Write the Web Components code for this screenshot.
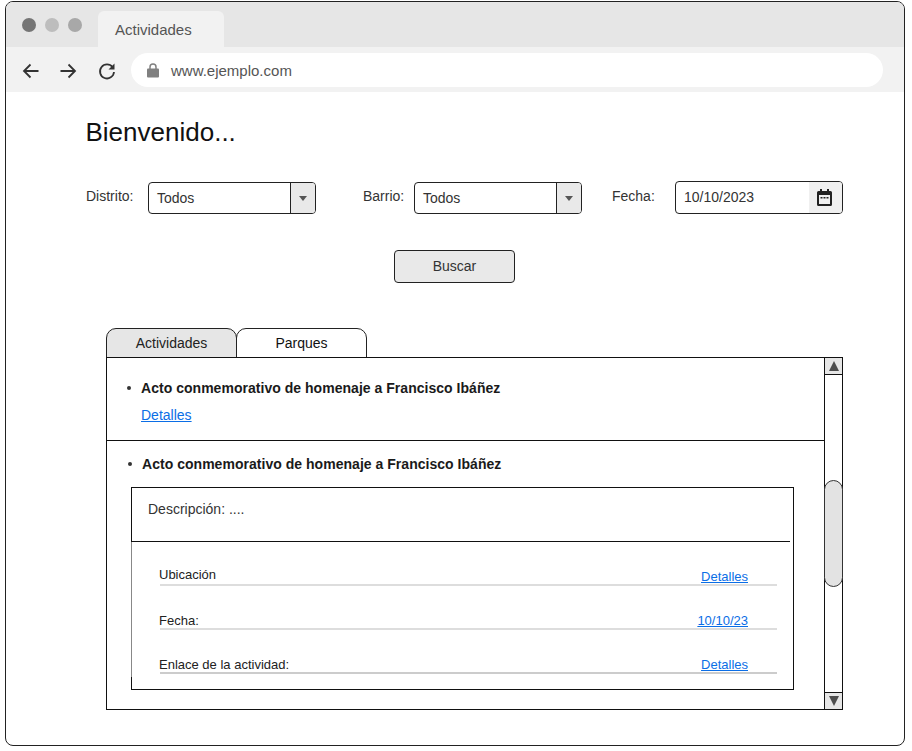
<!DOCTYPE html>
<html lang="es">
<head>
<meta charset="utf-8">
<title>Actividades</title>
<style>
  html, body { margin: 0; padding: 0; background: #fff; }
  body { font-family: "Liberation Sans", Arial, sans-serif; font-size: 14px; color: #222; }
</style>
</head>
<body>
<app-browser tab="Actividades" url="www.ejemplo.com">
  <app-search></app-search>
  <app-tabs>
    <app-scroll-panel>
      <app-activity title="Acto conmemorativo de homenaje a Francisco Ibáñez"></app-activity>
      <app-activity open title="Acto conmemorativo de homenaje a Francisco Ibáñez">
        <app-detail class="raised" label="Ubicación" value="Detalles"></app-detail>
        <app-detail label="Fecha:" value="10/10/23"></app-detail>
        <app-detail label="Enlace de la actividad:" value="Detalles"></app-detail>
      </app-activity>
    </app-scroll-panel>
  </app-tabs>
</app-browser>

<script>
class AppBrowser extends HTMLElement {
  connectedCallback() {
    const tab = this.getAttribute('tab');
    const url = this.getAttribute('url');
    this.attachShadow({ mode: 'open' }).innerHTML = `
      <style>
        :host {
          display: block;
          box-sizing: border-box;
          width: 900px;
          height: 745px;
          margin: 1px 0 0 5px;
          border: 1px solid #222;
          border-radius: 8px;
          overflow: hidden;
        }
        .strip {
          display: flex;
          height: 45px;
          background: #e6e6e6;
          box-sizing: border-box;
          padding: 9px 0 0 16px;
        }
        .dots { display: flex; gap: 9px; width: 76px; padding-top: 7px; }
        .dot { width: 14px; height: 14px; border-radius: 50%; background: #757575; }
        .dot:nth-child(2) { background: #bdbdbd; }
        .dot:nth-child(3) { background: #a8a8a8; }
        .tab {
          width: 126px;
          box-sizing: border-box;
          padding: 10px 0 0 17px;
          background: #f2f2f2;
          border-radius: 6px 6px 0 0;
          font-size: 15px;
          color: #555;
        }
        .bar {
          display: flex;
          align-items: flex-start;
          height: 45px;
          box-sizing: border-box;
          padding: 6px 21px 0 0;
          background: #f2f2f2;
        }
        .nav { display: flex; align-items: center; height: 34px; padding-left: 15px; width: 125px; box-sizing: border-box; }
        .nav svg { display: block; flex: none; margin-top: 1px; }
        .nav svg:nth-child(2) { margin-left: 17px; }
        .nav svg:nth-child(3) { margin-left: 19px; }
        .address {
          flex: 1;
          display: flex;
          align-items: center;
          gap: 12px;
          height: 34px;
          box-sizing: border-box;
          padding-left: 16px;
          background: #fff;
          border-radius: 17px;
          font-size: 15px;
          color: #555;
        }
        .address svg { display: block; }
        main { padding: 25px 0 0 80px; }
        h1 { margin: 0 0 0 -0.5px; font-size: 26px; font-weight: 400; line-height: 30px; color: #111; }
      </style>
      <div class="strip">
        <div class="dots"><span class="dot"></span><span class="dot"></span><span class="dot"></span></div>
        <div class="tab">${tab}</div>
      </div>
      <div class="bar">
        <div class="nav">
          <svg width="20" height="20" viewBox="0 0 20 20" fill="none" stroke="#333" stroke-width="1.800"><path d="M17.500 10H3M9.500 3.500 3 10l6.500 6.500"/></svg>
          <svg width="20" height="20" viewBox="0 0 20 20" fill="none" stroke="#333" stroke-width="1.800"><path d="M2.500 10H17M10.500 3.500 17 10l-6.500 6.500"/></svg>
          <svg width="20" height="20" viewBox="0 0 20 20" fill="none" stroke="#333" stroke-width="1.800"><path d="M15.600 6.200A7 7 0 1 0 17 11"/><path fill="#333" stroke="none" d="M17.500 2.500v6h-6z"/></svg>
        </div>
        <div class="address">
          <svg width="12" height="15" viewBox="0 0 12 15"><path fill="none" stroke="#808080" stroke-width="1.500" d="M3 6.500V4a3 3 0 0 1 6 0v2.500"/><rect y="5.500" width="12" height="9" rx="1" fill="#808080"/></svg>
          <span>${url}</span>
        </div>
      </div>
      <main>
        <h1>Bienvenido...</h1>
        <slot></slot>
      </main>`;
  }
}

class AppSelect extends HTMLElement {
  connectedCallback() {
    this.attachShadow({ mode: 'open' }).innerHTML = `
      <style>
        :host {
          display: flex;
          box-sizing: border-box;
          width: 168px;
          height: 32px;
          border: 1px solid #222;
          border-radius: 4px;
          overflow: hidden;
          background: #fff;
        }
        .value { flex: 1; padding: 7px 0 0 8px; font-size: 14px; line-height: 17px; color: #333; }
        .arrow {
          width: 24px;
          border-left: 1px solid #222;
          background: #e9e9e9;
          display: flex;
          align-items: center;
          justify-content: center;
        }
        .arrow::after {
          content: "";
          border: 4.500px solid transparent;
          border-top: 5px solid #555;
          border-bottom: 0;
        }
      </style>
      <div class="value"><slot></slot></div>
      <div class="arrow"></div>`;
  }
}

class AppDate extends HTMLElement {
  connectedCallback() {
    this.attachShadow({ mode: 'open' }).innerHTML = `
      <style>
        :host {
          display: flex;
          box-sizing: border-box;
          width: 168px;
          height: 33px;
          border: 1px solid #222;
          border-radius: 4px;
          overflow: hidden;
          background: #fff;
        }
        .value { flex: 1; padding: 7px 0 0 8px; font-size: 14px; line-height: 17px; color: #333; }
        .icon { width: 33px; background: #f0f0f0; display: flex; align-items: center; justify-content: center; }
        svg { display: block; margin-right: 2px; }
      </style>
      <div class="value"><slot></slot></div>
      <div class="icon">
        <svg width="15" height="17" viewBox="0 0 15 17"><path fill="#222" d="M3 0h2v2h5V0h2v2h1.500A1.500 1.500 0 0 1 15 3.500v12a1.500 1.500 0 0 1-1.500 1.500h-12A1.500 1.500 0 0 1 0 15.500v-12A1.500 1.500 0 0 1 1.500 2H3z"/><rect x="2" y="6" width="11" height="9" fill="#f0f0f0"/><rect x="3.500" y="8" width="2" height="1.500" fill="#222"/><rect x="6.500" y="8" width="2" height="1.500" fill="#222"/><rect x="9.500" y="8" width="2" height="1.500" fill="#222"/></svg>
      </div>`;
  }
}

class AppSearch extends HTMLElement {
  connectedCallback() {
    this.attachShadow({ mode: 'open' }).innerHTML = `
      <style>
        :host { display: block; width: 757px; padding-top: 34px; }
        .filters { display: flex; align-items: flex-start; font-size: 14px; color: #333; }
        .filters label { display: block; line-height: 17px; padding-top: 7px; }
        .l1 { width: 62px; }
        .l2 { width: 51px; margin-left: 47px; }
        .l3 { width: 63px; margin-left: 30px; }
        .filters app-select { margin-top: 1px; }
        .action { display: flex; justify-content: center; padding: 36px 20px 0 0; }
        button {
          width: 121px;
          height: 33px;
          padding: 0 0 2px;
          border: 1px solid #222;
          border-radius: 4px;
          background: #e9e9e9;
          font: inherit;
          font-size: 14px;
          color: #333;
        }
      </style>
      <div class="filters">
        <label class="l1">Distrito:</label>
        <app-select>Todos</app-select>
        <label class="l2">Barrio:</label>
        <app-select>Todos</app-select>
        <label class="l3">Fecha:</label>
        <app-date>10/10/2023</app-date>
      </div>
      <div class="action"><button type="button">Buscar</button></div>`;
  }
}

class AppTabs extends HTMLElement {
  connectedCallback() {
    this.attachShadow({ mode: 'open' }).innerHTML = `
      <style>
        :host { display: block; width: 737px; margin: 45px 0 0 20px; }
        .tabs { display: flex; height: 30px; margin-bottom: -1px; }
        .tab {
          box-sizing: border-box;
          width: 131px;
          height: 30px;
          border: 1px solid #222;
          border-radius: 10px 10px 0 0;
          background: #e6e6e6;
          text-align: center;
          font-size: 14px;
          line-height: 28px;
          color: #222;
        }
        .tab + .tab { background: #fff; margin-left: -1px; color: #111; }
      </style>
      <div class="tabs">
        <div class="tab">Actividades</div>
        <div class="tab">Parques</div>
      </div>
      <slot></slot>`;
  }
}

class AppScrollPanel extends HTMLElement {
  connectedCallback() {
    this.attachShadow({ mode: 'open' }).innerHTML = `
      <style>
        :host {
          display: flex;
          position: relative;
          box-sizing: border-box;
          height: 353px;
          border: 1px solid #111;
          background: #fff;
        }
        .content { flex: 1; min-width: 0; }
        .track {
          position: relative;
          width: 18px;
          box-sizing: border-box;
          border-left: 1px solid #111;
          display: flex;
          flex-direction: column;
          justify-content: space-between;
        }
        .step { height: 16px; background: #e6e6e6; display: flex; align-items: center; justify-content: center; }
        .step.up { border-bottom: 1px solid #111; }
        .step.down { border-top: 1px solid #111; }
        .step.up::after { content: ""; border: 5.500px solid transparent; border-bottom: 10px solid #4d4d4d; border-top: 0; }
        .step.down::after { content: ""; border: 5.500px solid transparent; border-top: 10px solid #4d4d4d; border-bottom: 0; }
        .thumb {
          position: absolute;
          left: -1px;
          top: 122px;
          box-sizing: border-box;
          width: 19px;
          height: 107px;
          border: 1px solid #333;
          border-radius: 10px;
          background: #e3e3e3;
        }
      </style>
      <div class="content"><slot></slot></div>
      <div class="track">
        <div class="step up"></div>
        <div class="thumb"></div>
        <div class="step down"></div>
      </div>`;
  }
}

class AppActivity extends HTMLElement {
  connectedCallback() {
    const title = this.getAttribute('title');
    const open = this.hasAttribute('open');
    this.removeAttribute('title');
    this.attachShadow({ mode: 'open' }).innerHTML = `
      <style>
        :host { display: block; box-sizing: border-box; height: 83px; padding: 21px 0 0 21px; border-bottom: 1px solid #111; }
        :host([open]) { height: auto; padding: 14px 0 0 22px; border-bottom: 0; }
        .head { display: flex; align-items: center; gap: 10px; height: 17px; font-size: 14px; font-weight: 700; color: #1a1a1a; letter-spacing: 0.03px; white-space: nowrap; }
        .head::before { content: ""; width: 4px; height: 4px; border-radius: 50%; background: #333; flex: none; margin-left: -1px; }
        a { color: #0b6ee6; text-decoration: underline; font-size: 14px; line-height: 17px; }
        .more { display: block; padding: 11px 0 0 13px; }
        .box {
          position: relative;
          box-sizing: border-box;
          width: 663px;
          height: 203px;
          margin: 15px 0 0 2px;
          border: 1px solid #111;
        }
        .box::before {
          content: "";
          position: absolute;
          left: -1px;
          top: 54px;
          width: 1px;
          height: 135px;
          background: #888;
        }
        .desc { height: 54px; box-sizing: border-box; width: 658px; padding: 13px 0 0 16px; font-size: 14px; line-height: 17px; color: #333; border-bottom: 1px solid #111; }
        .rows { padding: 0 16px 0 28px; }
      </style>
      <div class="head">${title}</div>
      ${open ? `
        <div class="box">
          <div class="desc">Descripción: ....</div>
          <div class="rows"><slot></slot></div>
        </div>` : '<a class="more" href="#">Detalles</a>'}`;
  }
}

class AppDetail extends HTMLElement {
  connectedCallback() {
    const label = this.getAttribute('label');
    const value = this.getAttribute('value');
    this.attachShadow({ mode: 'open' }).innerHTML = `
      <style>
        :host {
          display: flex;
          justify-content: space-between;
          align-items: flex-end;
          box-sizing: border-box;
          height: 44px;
          border-bottom: 2px solid #ddd;
          font-size: 13px;
          line-height: 15px;
          color: #222;
        }
        :host(:last-child) { border-bottom-color: #ccc; }
        span { margin-left: -1px; }
        :host(.raised) span { margin-bottom: 2px; }
        a { color: #0b6ee6; text-decoration: underline; padding-right: 29px; }
      </style>
      <span>${label}</span>
      <a href="#">${value}</a>`;
  }
}

customElements.define('app-browser', AppBrowser);
customElements.define('app-select', AppSelect);
customElements.define('app-date', AppDate);
customElements.define('app-search', AppSearch);
customElements.define('app-tabs', AppTabs);
customElements.define('app-scroll-panel', AppScrollPanel);
customElements.define('app-activity', AppActivity);
customElements.define('app-detail', AppDetail);
</script>
</body>
</html>
